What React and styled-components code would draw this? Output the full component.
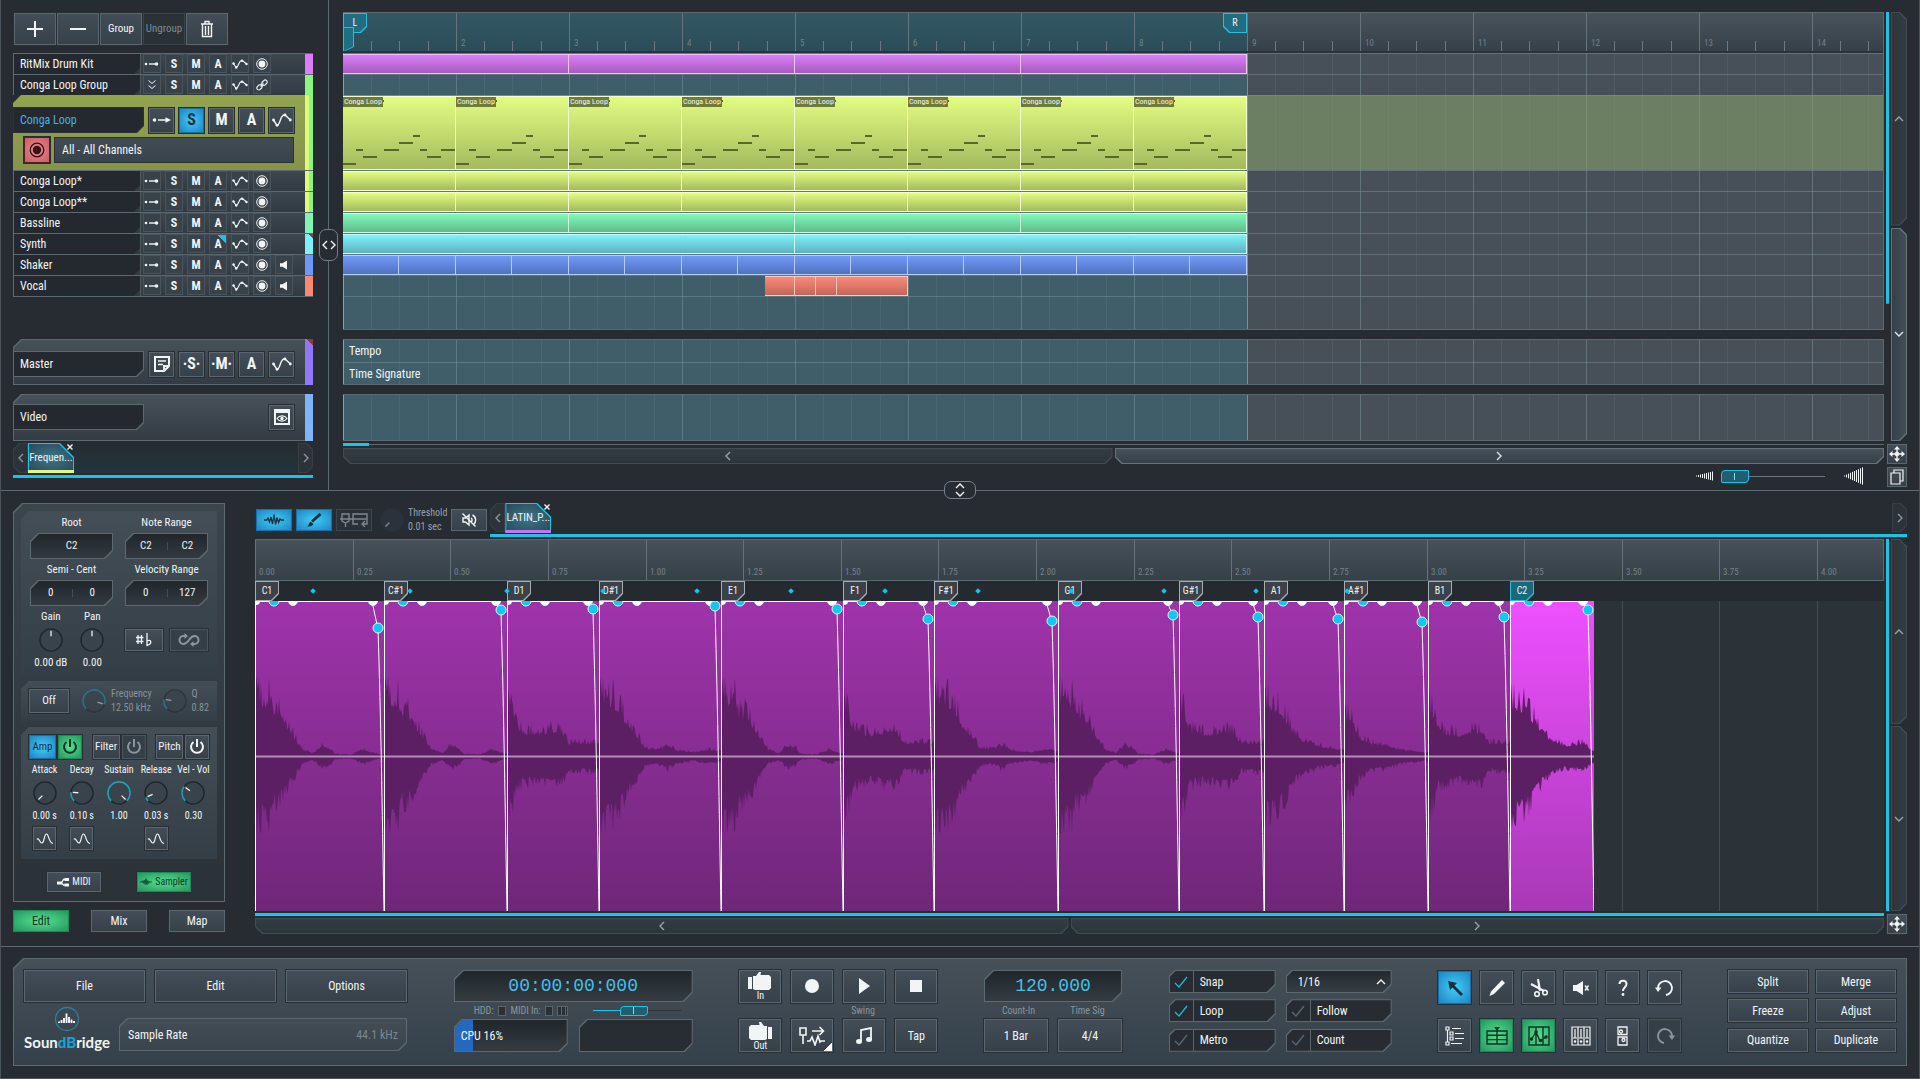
import React from 'react';
import styled, { createGlobalStyle, css } from 'styled-components';

/* ---------- tokens ---------- */
const C = {
  page: '#262c31',
  dark: '#23292e',
  line: '#5d6971',
  cyan: '#1ac4e6',
  text: '#f2f5f6',
  dim: '#7d888f',
};
const BAR = 113;
const LOOP = BAR * 8;

const Global = createGlobalStyle`
  * { box-sizing: border-box; }
  body { margin: 0; background: ${C.page}; }
  body, button, input, select, output {
    font-family: "Liberation Sans Narrow", "Roboto Condensed", Roboto, "Liberation Sans", sans-serif;
    font-size: 11px; line-height: 14px; color: ${C.text};
  }
  button, input, select { margin: 0; padding: 0; border: 0; border-radius: 0; background: none; }
  svg { display: block; flex: none; }
`;

const poly = ({ tl = 0, tr = 0, br = 0, bl = 0 }) =>
  `polygon(${tl}px 0, calc(100% - ${tr}px) 0, 100% ${tr}px, 100% calc(100% - ${br}px), calc(100% - ${br}px) 100%, ${bl}px 100%, 0 calc(100% - ${bl}px), 0 ${tl}px)`;

const cut = (corners, bg, line = C.line) => css`
  position: relative;
  isolation: isolate;
  background: ${line};
  clip-path: ${poly(corners)};
  &::before {
    content: '';
    position: absolute;
    inset: 1px;
    z-index: -1;
    background: ${bg};
    clip-path: ${poly(corners)};
  }
`;

const tones = {
  plain: css`background: linear-gradient(#434d57, #37414a); border-color: #5b6770;`,
  flat: css`background: #39434c; border-color: #46515a;`,
  ghost: css`background: #2a3137; border-color: #3b444b; color: ${C.dim};`,
  muted: css`background: #353f48; border-color: #4a555d; color: #8b959b;`,
  blue: css`background: radial-gradient(#43cdf2, #1c85c8); border-color: #1b6da8; color: #12303f;`,
  green: css`background: radial-gradient(#56e092, #22985f); border-color: #1d8a55; color: #0e3522;`,
  red: css`background: radial-gradient(#e88a8d, #c95d63); border-color: #4b2227; color: #3a1015;`,
};

const Btn = styled.button`
  display: flex;
  align-items: center;
  justify-content: center;
  flex: ${p => (p.$grow ? '1' : 'none')};
  width: ${p => (p.$w ? p.$w + 'px' : 'auto')};
  height: ${p => p.$h}px;
  border: 1px solid;
  box-shadow: 0 0 0 1px #272e34;
  white-space: nowrap;
  font-size: ${p => p.$fs || 11}px;
  font-weight: ${p => (p.$bold ? 700 : 400)};
  ${p => tones[p.$tone || 'plain']}
`;

/* ---------- icons ---------- */
const S = { fill: 'none', stroke: 'currentColor', strokeWidth: 1.4 };
const F = { fill: 'currentColor', stroke: 'none' };
const icons = {
  plus: [18, 18, <path {...S} strokeWidth="2" d="M9 1v16M1 9h16" />],
  minus: [18, 18, <path {...S} strokeWidth="2" d="M1 9h16" />],
  trash: [14, 18, <path {...S} d="M1 4h12M5 4V1.5h4V4M2.5 4v12.500h9V4M5.500 6v9M8.500 6v9" />],
  route: [16, 8, <g {...F}><circle cx="2" cy="4" r="1.300" /><path d="M5 3.300h6v1.400H5z" /><circle cx="12.500" cy="4" r="1.800" /></g>],
  routeBig: [20, 10, <g {...F}><circle cx="2.500" cy="5" r="1.800" /><path d="M6 4.200h9v1.600H6z" /><path d="M13.500 2.200L19 5l-5.500 2.800z" /></g>],
  curve: [16, 10, <g><path {...S} strokeWidth="1.100" d="M1.500 4.500L4 8.500C7 8 6.500 2 9.500 1.500h1l4 3.500" /><g {...F}><circle cx="1.500" cy="4.500" r="1.200" /><circle cx="4.200" cy="8.500" r="1.200" /><circle cx="10" cy="1.800" r="1.200" /><circle cx="14.500" cy="5" r="1.200" /></g></g>],
  curveBig: [20, 14, <g><path {...S} d="M1.500 7L5 12.500C8.500 11.500 8 2.500 12 2h1l5.500 5" /><g {...F}><circle cx="1.500" cy="7" r="1.400" /><circle cx="5" cy="12.300" r="1.400" /><circle cx="13" cy="2" r="1.400" /><circle cx="18.300" cy="7" r="1.400" /></g></g>],
  rec: [12, 12, <g><circle {...S} strokeWidth="1" cx="6" cy="6" r="5.300" /><circle {...F} cx="6" cy="6" r="3.400" /></g>],
  recBig: [16, 16, <g><circle {...S} strokeWidth="1.300" cx="8" cy="8" r="6.800" /><circle {...F} cx="8" cy="8" r="4.200" /></g>],
  dbl: [10, 12, <path {...S} strokeWidth="1" d="M1.500 1.500L5 4.500l3.500-3M1.500 6.500L5 9.500l3.500-3" />],
  link: [12, 12, <g {...S} strokeWidth="1.200"><rect x="5.500" y="1.700" width="6" height="4" rx="2" transform="rotate(-45 8.500 3.700)" /><rect x=".5" y="6.300" width="6" height="4" rx="2" transform="rotate(-45 3.500 8.300)" /><path d="M4.500 7.500l3-3" /></g>],
  spk: [10, 10, <path {...F} d="M1 3.200h2.500L8 .5v9L3.500 6.800H1z" />],
  note: [18, 18, <g {...S} strokeWidth="2"><path d="M2 2h14v9l-5 5H2zM16 11h-5v5" /><path strokeWidth="1.500" d="M5 6h8M5 9.500h5" /></g>],
  eye: [18, 18, <g><path {...S} strokeWidth="2" d="M2 2h14v14H2z" /><path {...F} d="M2 1h14v4H2z" /><path {...S} strokeWidth="1.200" d="M4 10.500c2.500-3.500 7.500-3.500 10 0-2.500 3.500-7.500 3.500-10 0z" /><circle {...F} cx="9" cy="10.500" r="1.700" /></g>],
  up: [10, 6, <path {...S} d="M1 5l4-4 4 4" />],
  down: [10, 6, <path {...S} d="M1 1l4 4 4-4" />],
  left: [6, 10, <path {...S} d="M5 1L1 5l4 4" />],
  right: [6, 10, <path {...S} d="M1 1l4 4-4 4" />],
  move: [16, 16, <g {...F}><path d="M8 0l3 3.500H5zM8 16l3-3.500H5zM0 8l3.500-3v6zM16 8l-3.500-3v6z" /><path {...S} d="M8 3v10M3 8h10" /><circle cx="8" cy="8" r="2.300" /></g>],
  copy: [14, 16, <g {...S} strokeWidth="1.200"><path d="M4 4V1h9v11h-3" /><path d="M1 4h9v11H1z" /></g>],
  wave: [20, 12, <path {...S} strokeWidth="1.300" d="M0 6h3l1-2 1.500 4L7 3l1.500 7L10 .5l1.500 10L13 3.500l1.500 5L16 5l1 1h3" />],
  brush: [16, 14, <g><path {...S} strokeWidth="3" d="M6 8.500L14.500 1" /><path {...F} d="M1 13.500c2-.5 1.500-3.500 3.500-5l3 2.500C6 13 3.500 13.800 1 13.500z" /></g>],
  chain: [28, 14, <g {...S}><path d="M2 1h7v7L5.500 10 2 8zM5.500 10v4M0 6h27" /><path d="M18 11h-5V1h14v10h-4M25 8l-3 3 3 3" /></g>],
  mute: [16, 16, <g {...S}><path d="M2 6h2.500L8 3v10l-3.500-3H2z" /><path d="M1.500 1.500l13 13M10 6c1.500 1 1.500 3 0 4M11.500 3c4 2 4 7 1 9.500" /></g>],
  sharp: [18, 14, <g {...S} strokeWidth="1.300"><path d="M3 2v9M6.500 2v9M1 4.500h7.500M1 8.500h7.500M12 0v12.500c6-2 4-7 0-4.500" /></g>],
  inf: [22, 14, <g><path {...S} strokeWidth="2" d="M7 3H5.500a4 4 0 0 0 0 8C11 11 11 3 16.500 3a4 4 0 0 1 0 8H15" /><path {...F} d="M6.500 0v6l3.500-3zM15.500 8v6L12 11z" /></g>],
  power: [16, 16, <path {...S} strokeWidth="2" d="M8 0v8M4.500 3a6 6 0 1 0 7 0" />],
  env: [18, 12, <path {...S} strokeWidth="1.200" d="M1 6.500c2-3 2.500 4 5 3.500S8 1 10.500 1s2 9 6.500 9.500" />],
  nodes: [12, 10, <g><path {...S} d="M1 6h3.500M4.500 6l2-3.500H9M4.500 6l2 2H9" /><path {...F} d="M0 4.500h5v3H0zM7.500 1H12v3H7.500zM7.500 6.500H12v3H7.500z" /></g>],
  camIn: [24, 20, <path {...F} d="M0 6h4v12H0zM5 5h3l3-4h2l-.5 3H21l2 2v11l-2 2H7l-2-1z" />],
  camOut: [24, 20, <path {...F} d="M24 6h-4v12h4zM19 5h-3l-3-4h-2l.5 3H3L1 6v11l2 2h14l2-1z" />],
  record: [16, 16, <circle {...F} cx="8" cy="8" r="7" />],
  play: [12, 16, <path {...F} d="M1 0l11 8-11 8z" />],
  stop: [12, 12, <path {...F} d="M0 0h12v12H0z" />],
  sync: [28, 20, <g {...S} strokeWidth="1.600"><path d="M2 2h6v7H2zM5 9v9M14 5h11M21.500 1l4 4-4 4M9 15h3l2-4 3 8 3-9 2 6 1-1h4" /></g>],
  music: [18, 18, <g><path {...S} strokeWidth="1.800" d="M6 14V3l10-2v11" /><ellipse {...F} cx="4" cy="14.500" rx="3" ry="2.500" /><ellipse {...F} cx="14" cy="12.500" rx="3" ry="2.500" /></g>],
  arrow: [18, 18, <path {...F} d="M2 2l9 2-2.500 2.500L17 15l-2 2-8.500-8.500L4 11z" />],
  pencil: [18, 18, <path {...F} d="M14 1l3 3L6 15l-4.500 2L3 12.500z" />],
  scissors: [20, 20, <g {...S} strokeWidth="1.600"><path strokeWidth="2.200" d="M9 1l2 12M2 6l13 7" /><circle cx="8" cy="16" r="2.300" /><circle cx="16" cy="14.500" r="2.300" /></g>],
  spkx: [18, 16, <g><path {...F} d="M1 5h3.500L11 1v14L4.500 11H1z" /><path {...S} d="M13 5.500l3.500 5M16.500 5.500l-3.500 5" /></g>],
  help: [12, 18, <g><path {...S} strokeWidth="2" d="M2.500 5c0-4.500 7-4.500 7 0 0 3-3.500 3.500-3.500 7" /><circle {...F} cx="6" cy="15.500" r="1.400" /></g>],
  undo: [20, 18, <g><path {...S} strokeWidth="1.900" d="M3 9a7 7 0 1 1 8 7" /><path {...F} d="M0 8.500h6.500L3 13z" /></g>],
  redo: [20, 18, <g><path {...S} strokeWidth="1.900" d="M17 9a7 7 0 1 0-8 7" /><path {...F} d="M20 8.500h-6.500L17 13z" /></g>],
  tree: [20, 20, <g {...S} strokeWidth="1.200"><path d="M1 1h3v3H1zM5 6h3v3H5zM5 11h3v3H5zM1 16h3v3H1zM7 2.500h9M10 7.500h9M10 12.500h9M6 17.500h11M2.500 4v12" /></g>],
  grid: [22, 18, <g {...S} strokeWidth="1.400"><path d="M1 4h20v13H1zM1 8.300h20M1 12.600h20M11 2v15" /><path {...F} d="M8 0h6l-3 4z" /></g>],
  auto: [22, 20, <g {...S} strokeWidth="1.400"><path d="M1 1h20v18H1zM8 1v18M15 1v18M3 14l5-8 4 9 6-4" /><g {...F}><circle cx="8" cy="6" r="1.800" /><circle cx="12.500" cy="14.500" r="1.800" /><circle cx="3.500" cy="13" r="1.800" /><circle cx="18" cy="11" r="1.800" /></g></g>],
  mixer: [20, 20, <g {...S} strokeWidth="1.200"><path d="M1 1h18v18H1zM7 1v18M13 1v18M4 3v9M10 3v9M16 3v9M2 12h4M8 12h4M14 12h4" /><g {...F}><circle cx="4" cy="15.500" r="1.200" /><circle cx="10" cy="15.500" r="1.200" /><circle cx="16" cy="15.500" r="1.200" /></g></g>],
  rack: [12, 20, <g {...S} strokeWidth="1.300"><path d="M1 1h9v7.500H1zM1 11h9v8H1z" /><circle cx="4" cy="5.500" r="1.500" /><circle cx="6.500" cy="14" r="1.500" /></g>],
  check: [14, 12, <path {...S} strokeWidth="1.300" d="M1 7l4 4 8-10" />],
  x: [6, 6, <path {...S} d="M.5.5l5 5M5.500.5l-5 5" />],
  volSm: [18, 10, <g {...F}>{[0, 1, 2, 3, 4, 5, 6, 7, 8].map(i => <rect key={i} x={i * 2} y={4.500 - i / 2} width="1" height={1 + i} />)}</g>],
  volLg: [20, 18, <g {...F}>{[0, 1, 2, 3, 4, 5, 6, 7, 8, 9].map(i => <rect key={i} x={i * 2} y={8.500 - i * 0.900} width="1" height={1 + i * 1.800} />)}</g>],
};
const Icon = ({ n }) => {
  const [w, h, body] = icons[n];
  return <svg width={w} height={h} viewBox={`0 0 ${w} ${h}`} aria-hidden="true">{body}</svg>;
};

/* ---------- shell ---------- */
const App_ = styled.main`
  display: flex;
  flex-direction: column;
  min-height: 100vh;
  border: solid #4c545a;
  border-width: 0 1px 1px;
  background: ${C.page};
`;
const Arranger = styled.section`
  position: relative;
  display: flex;
  border-bottom: 1px solid ${C.line};
`;
const TrackPane = styled.div`
  position: relative;
  flex: none;
  width: 328px;
  padding: 13px 15px 11px 12px;
  border-right: 1px solid ${C.line};
`;
const Tools = styled.div`
  display: flex;
  gap: 1px;
  padding-left: 1px;
  margin-bottom: 8px;
`;
const TrackList = styled.div`
  height: 277px;
  margin-bottom: 9px;
`;
const Track = styled.div`
  display: flex;
  height: 21px;
  border: solid ${C.line};
  border-width: 1px 0 0 1px;
  background: linear-gradient(#3d4750, #313a42);
  &:last-child { height: 22px; border-bottom-width: 1px; }
`;
const TrackName = styled.span`
  flex: none;
  width: 126px;
  padding: 3px 6px;
  line-height: 15px;
  font-size: 12px;
  white-space: nowrap;
  background: ${C.dark};
  clip-path: ${poly({ br: 6 })};
`;
const Cells = styled.div`
  display: flex;
  flex: 1;
  gap: 4px;
  padding-left: 2px;
  border-left: 1px solid #4e5961;
`;
const Cell = styled.button`
  display: flex;
  align-items: center;
  justify-content: center;
  width: 18px;
  height: 19px;
  border: 1px solid #48535c;
  background: ${p => (p.$auto ? `linear-gradient(45deg, #38424b 0 75%, ${C.cyan} 75%)` : '#38424b')};
  font-weight: 700;
  font-size: 12px;
`;
const Color = styled.span`
  flex: none;
  width: 8px;
  background: ${p => p.$c};
`;
const Selected = styled.div`
  display: flex;
  height: 75px;
  background: linear-gradient(#93a450, #86944a);
  clip-path: ${poly({ tl: 8 })};
`;
const Head = styled.div`
  display: flex;
  height: ${p => p.$h}px;
  margin-bottom: ${p => p.$gap}px;
  ${cut({ tl: 8 }, 'linear-gradient(#47515a, #333c44)')}
`;
const HeadBody = styled.div`
  flex: 1;
  padding-top: ${p => p.$top}px;
`;
const HeadLine = styled.div`
  display: flex;
  align-items: center;
  gap: 5px;
  padding-right: 11px;
`;
const HeadName = styled.span`
  flex: none;
  width: 131px;
  height: 26px;
  padding: 6px 7px;
  font-size: 12px;
  color: ${p => (p.$on ? '#3fb4e6' : C.text)};
  ${p => cut({ br: 7 }, C.dark, p.$on ? '#2b3236' : C.line)}
`;
const Push = styled.span`flex: 1;`;
const Gap = styled.span`
  flex: none;
  width: ${p => p.$w}px;
`;
const ChannelLine = styled.div`
  display: flex;
  gap: 4px;
  padding: 4px 11px 0;
`;
const Channel = styled.select`
  appearance: none;
  flex: 1;
  height: 26px;
  padding: 0 7px;
  border: 1px solid #2b3238;
  background: linear-gradient(#414c55, #39434c);
  font-size: 12px;
`;
const TabBar = styled.div`
  display: flex;
  height: ${p => (p.$h)}px;
  padding-bottom: 2px;
  border-bottom: 3px solid ${C.cyan};
`;
const TabArrow = styled.button`
  width: 15px;
  display: flex;
  align-items: center;
  justify-content: center;
  color: #8b959b;
  ${p => (p.$end ? cut({ tr: 6, br: 6 }, '#2c343a', '#363f46') : cut({ tl: 6, bl: 6 }, '#2c343a', '#363f46'))}
`;
const TabWrap = styled.div`
  position: relative;
  width: 46px;
`;
const Tab = styled.button`
  width: 46px;
  height: 30px;
  overflow: hidden;
  white-space: nowrap;
  font-size: 11px;
  ${cut({ tr: 14 }, 'radial-gradient(#3f7686, #27495a)', C.cyan)}
  &::after {
    content: '';
    position: absolute;
    inset: auto 0 0;
    height: 3px;
    background: ${p => p.$mark};
  }
`;
const TabClose = styled.button`
  position: absolute;
  top: 1px;
  right: 1px;
`;
const TabFill = styled.span`
  flex: 1;
  background: ${p => (p.$lit ? 'linear-gradient(#262c31, #24343e)' : 'none')};
`;
const Grip = styled.button`
  position: absolute;
  z-index: 3;
  display: flex;
  align-items: center;
  justify-content: center;
  gap: 2px;
  ${p => (p.$v
    ? css`flex-direction: column; left: calc(50% - 16px); bottom: -9px; width: 32px; height: 18px;`
    : css`top: 229px; right: -10px; width: 19px; height: 32px;`)}
  border: 1px solid #76828a;
  border-radius: 7px;
  background: ${C.page};
`;

/* ---------- timeline ---------- */
const TimePane = styled.div`
  flex: 1;
  min-width: 0;
  display: flex;
  gap: 2px;
  padding: 12px 12px 3px 14px;
`;
const TimeCol = styled.div`
  flex: 1;
  min-width: 0;
`;
const barLines = (a, b) => css`
  background-image: linear-gradient(90deg, ${a} 0 1px, transparent 1px 28px, ${b} 28px 29px, transparent 29px 56px, ${b} 56px 57px, transparent 57px 85px, ${b} 85px 86px, transparent 86px);
  background-size: ${BAR}px 100%;
`;
const Board = styled.div`
  position: relative;
  height: ${p => p.$h}px;
  margin-bottom: ${p => p.$gap}px;
  overflow: hidden;
  border: solid ${C.line};
  border-width: 1px 1px 1px 0;
  background: linear-gradient(90deg, ${C.cyan} 0 1px, #3f5e69 1px ${LOOP}px, #69808a ${LOOP}px ${LOOP + 1}px, #475059 ${LOOP + 1}px);
`;
const Lines = styled.div`
  height: 100%;
  ${barLines('rgba(150,175,185,.35)', 'rgba(130,155,165,.14)')}
`;
const Ruler = styled.div`
  position: relative;
  display: flex;
  height: 40px;
  overflow: hidden;
  border-bottom: 2px solid #2a3339;
  background:
    linear-gradient(90deg, rgba(30,90,105,.5) 0 ${LOOP}px, transparent ${LOOP}px),
    linear-gradient(#48535c, #364049);
`;
const RulerBar = styled.span`
  flex: none;
  width: ${BAR}px;
  padding: 23px 0 0 4px;
  border-left: 1px solid #66757d;
  color: #71808a;
  font-size: 9px;
  line-height: 14px;
  background:
    linear-gradient(#6b7880, #6b7880) 27px 100% / 1px 10px no-repeat,
    linear-gradient(#6b7880, #6b7880) 55px 100% / 1px 10px no-repeat,
    linear-gradient(#6b7880, #6b7880) 84px 100% / 1px 10px no-repeat;
`;
const Locator = styled.button`
  width: 24px;
  height: 20px;
  font-size: 10px;
  ${p => cut(p.$end ? { bl: 6 } : { br: 6 }, '#246b80', '#27bfdd')}
  position: absolute;
  top: 0;
  left: ${p => p.$x}px;
`;
const Playhead = styled.span`
  position: absolute;
  top: 14px;
  left: 0;
  width: 11px;
  height: 25px;
  background: ${C.cyan};
  clip-path: polygon(0 0, 100% 0, 100% 80%, 0 100%);
  &::before {
    content: '';
    position: absolute;
    inset: 1px;
    background: #1f6f83;
    clip-path: polygon(0 0, 100% 0, 100% 80%, 0 100%);
  }
`;
const Lane = styled.div`
  display: flex;
  height: ${p => p.$h || 21}px;
  padding-left: ${p => p.$x || 0}px;
  border-top: 1px solid rgba(125,145,152,.5);
  background: ${p => (p.$sel ? 'rgba(139,165,105,.55)' : 'none')};
`;
const Clip = styled.div`
  position: relative;
  flex: none;
  width: ${p => p.$w}px;
  border: solid ${p => p.$edge};
  border-width: 1px 1px 1px 0;
  background: linear-gradient(${p => p.$a}, ${p => p.$b});
`;
const ClipName = styled.span`
  position: absolute;
  top: 0;
  left: 0;
  padding: 0 1px;
  background: #6e7b38;
  font-size: 8px;
  line-height: 10px;
  white-space: nowrap;
`;
const MetaLane = styled.div`
  height: 22px;
  padding: 4px 6px;
  font-size: 12px;
  & + & { border-top: 1px solid rgba(125,145,152,.5); height: 23px; }
`;
const Progress = styled.div`
  height: 3px;
  margin-bottom: 2px;
  background: linear-gradient(90deg, ${C.cyan} 0 26px, transparent 26px), linear-gradient(transparent 1px, ${C.line} 1px 2px, transparent 2px);
`;
const HScroll = styled.div`
  display: flex;
  gap: 2px;
`;
const HBtn = styled.button`
  flex: ${p => p.$f} 1 0;
  height: 16px;
  display: flex;
  align-items: center;
  justify-content: center;
  color: ${p => (p.$lit ? '#dfe6e9' : '#98a2a8')};
  ${p => cut({ bl: 7, br: 7 }, p.$lit ? 'linear-gradient(#47515a, #36404a)' : 'linear-gradient(#333c43, #2d353c)', p.$lit ? '#66737b' : '#414b52')}
`;
const ZoomRow = styled.div`
  display: flex;
  justify-content: flex-end;
  align-items: center;
  gap: 7px;
  height: 22px;
  padding: 2px 20px 0 0;
`;
const Range = styled.input`
  appearance: none;
  width: ${p => p.$w}px;
  height: 14px;
  background: linear-gradient(90deg, ${p => p.$fill} 0 40%, ${p => p.$rest} 40%) center / 100% 1px no-repeat;
  &::-webkit-slider-thumb {
    appearance: none;
    width: 28px;
    height: ${p => p.$t}px;
    border: 1px solid ${C.cyan};
    border-radius: 4px 1px 4px 1px;
    background: linear-gradient(90deg, transparent 12px, #7fdcec 12px 13px, transparent 13px) center / 100% 7px no-repeat, #1f5f70;
  }
`;
const SideCol = styled.div`
  flex: none;
  width: 21px;
  display: flex;
  flex-direction: column;
  align-items: flex-end;
  gap: 3px;
`;
const VScroll = styled.div`
  display: grid;
  grid-template-rows: 1fr 1fr;
  row-gap: 2px;
  height: ${p => (p.$h ? p.$h + 'px' : 'auto')};
  flex: ${p => (p.$h ? 'none' : '1')};
  width: 21px;
  padding-left: 5px;
  background: linear-gradient(${C.cyan}, ${C.cyan}) 0 0 / 3px ${p => p.$fill} no-repeat;
`;
const VBtn = styled.button`
  display: flex;
  align-items: center;
  justify-content: center;
  color: ${p => (p.$lit ? '#dfe6e9' : '#98a2a8')};
  ${p => cut({ tr: 7, br: 7 }, p.$lit ? 'linear-gradient(90deg, #36404a, #444e57)' : 'linear-gradient(90deg, #2d353c, #333c43)', p.$lit ? '#66737b' : '#414b52')}
`;

/* ---------- sampler ---------- */
const Editor = styled.section`
  flex: 1;
  display: flex;
  padding: 12px 12px 12px;
  border-bottom: 1px solid ${C.line};
`;
const Side = styled.div`
  flex: none;
  width: 212px;
  margin-right: 30px;
`;
const SidePanel = styled.div`
  display: flex;
  flex-direction: column;
  gap: 6px;
  padding: 8px 8px 10px;
  margin-bottom: 8px;
  ${cut({ tl: 9 }, 'linear-gradient(#3b454e, #2a3137)')}
`;
const Card = styled.div`
  background: linear-gradient(#434e57, #343e46);
  clip-path: ${poly({ tl: 8 })};
  ${p => p.$kind === 'tune' && css`
    display: grid;
    grid-template-columns: 83px 83px;
    column-gap: 12px;
    row-gap: 4px;
    padding: 5px 9px;
  `}
  ${p => p.$kind === 'filter' && css`
    display: flex;
    align-items: center;
    gap: 5px;
    height: 40px;
    padding: 0 8px;
    color: #87939a;
    font-size: 10px;
  `}
  ${p => p.$kind === 'amp' && css`padding: 8px 5px 9px;`}
`;
const Field = styled.label`
  display: flex;
  flex-direction: column;
  align-items: center;
  gap: 3px;
  font-size: 11px;
`;
const FieldBox = styled.span`
  display: flex;
  width: 83px;
  height: 26px;
  ${cut({ tl: 8, br: 8 }, 'linear-gradient(#20262a, #333b41)')}
`;
const FieldInput = styled.input`
  width: 0;
  flex: 1;
  text-align: center;
  & + & { background: linear-gradient(#444d53, #444d53) 0 50% / 1px 8px no-repeat; }
`;
const KnobPair = styled.div`
  display: grid;
  grid-template-columns: 1fr 1fr;
`;
const KnobCol = styled.div`
  display: flex;
  flex-direction: column;
  align-items: center;
  gap: 4px;
  white-space: nowrap;
`;
const IconPair = styled.div`
  display: flex;
  align-items: center;
  justify-content: space-between;
`;
const Two = styled.span`
  display: flex;
  flex-direction: column;
  white-space: nowrap;
  ${p => p.$light && css`color: #98a1a6; font-size: 10px;`}
`;
const AmpTop = styled.div`
  display: flex;
  justify-content: space-between;
  padding: 0 3px;
  margin-bottom: 4px;
`;
const AmpPair = styled.div`
  display: flex;
  gap: 2px;
`;
const AmpKnobs = styled.div`
  display: grid;
  grid-template-columns: repeat(5, 1fr);
  font-size: 10px;
`;
const Modes = styled.div`
  display: flex;
  justify-content: space-between;
  padding: 7px 26px 0;
`;
const ModeIn = styled.span`
  display: flex;
  align-items: center;
  gap: 3px;
`;
const Pages = styled.div`
  display: flex;
  justify-content: space-between;
`;
const Work = styled.div`
  flex: 1;
  min-width: 0;
  display: flex;
  flex-direction: column;
`;
const WorkTop = styled.div`
  display: flex;
  gap: 3px;
  height: 34px;
`;
const WorkTools = styled.div`
  display: flex;
  align-items: center;
  gap: 4px;
  padding: 5px 0 6px 1px;
`;
const WorkTabs = styled.div`
  flex: 1;
  min-width: 0;
`;
const WorkBody = styled.div`
  flex: 1;
  display: flex;
  gap: 2px;
  padding-top: 2px;
`;
const WaveCol = styled.div`
  flex: 1;
  min-width: 0;
  display: flex;
  flex-direction: column;
`;
const WaveRuler = styled.div`
  display: flex;
  height: 42px;
  overflow: hidden;
  border: 1px solid ${C.line};
  border-left: 0;
  background: linear-gradient(#47515a, #364048);
`;
const Tick = styled.span`
  flex: none;
  width: ${p => p.$w}px;
  padding: 25px 0 0 3px;
  border-left: 1px solid ${p => (p.$soft ? '#454d53' : '#66727a')};
  font-size: 9px;
  color: #75818a;
`;
const SliceLane = styled.div`
  position: relative;
  display: flex;
  height: 20px;
  background: #242a2f;
`;
const SliceHead = styled.span`
  flex: none;
  width: ${p => p.$w}px;
`;
const SliceTag = styled.button`
  width: 24px;
  height: 20px;
  font-size: 10px;
  ${p => cut({ br: 7 }, p.$on ? '#17697b' : '#3a4148', p.$on ? '#27bfdd' : '#a5adb2')}
`;
const Marker = styled.span`
  position: absolute;
  top: 8px;
  left: ${p => p.$x}px;
  width: 4px;
  height: 4px;
  margin-left: -2px;
  background: #10c6e8;
  transform: rotate(45deg);
`;
const WaveArea = styled.div`
  position: relative;
  flex: 1;
  min-height: 308px;
  display: flex;
  overflow: hidden;
  background: #2b3238;
`;
const WaveGrid = styled.div`
  position: absolute;
  inset: 0;
  display: flex;
`;
const Slice = styled.div`
  position: relative;
  flex: none;
  width: ${p => p.$w}px;
  background: ${p => (p.$on ? 'linear-gradient(#ee50ff, #a838b6)' : 'linear-gradient(#9f33ab, #6f2779)')};
  svg { position: absolute; inset: 0; }
`;
const WaveFoot = styled.div`
  height: 3px;
  margin: 2px 0;
  background: ${C.cyan};
`;

/* ---------- transport ---------- */
const Footer = styled.footer`
  padding: 11px 12px 12px;
`;
const Deck = styled.div`
  display: flex;
  justify-content: space-between;
  gap: 12px;
  padding: 12px 11px 14px;
  font-size: 12px;
  ${cut({ tl: 10 }, 'linear-gradient(#465059, #34404a)')}
`;
const Stack = styled.div`
  display: flex;
  flex-direction: column;
  width: ${p => p.$w}px;
`;
const Line = styled.div`
  display: flex;
  align-items: ${p => (p.$end ? 'flex-end' : 'center')};
  justify-content: space-between;
  gap: ${p => p.$gap || 0}px;
  height: ${p => p.$h || 32}px;
`;
const Mid = styled.div`
  display: ${p => (p.$cols ? 'grid' : 'flex')};
  grid-template-columns: ${p => p.$cols || 'none'};
  align-items: center;
  height: 17px;
  font-size: 10px;
  color: #8a959b;
  text-align: ${p => (p.$cols ? 'center' : 'left')};
`;
const Logo = styled.div`
  display: flex;
  flex-direction: column;
  align-items: center;
  justify-content: flex-end;
  gap: 2px;
  width: 86px;
  height: 44px;
`;
const Word = styled.span`
  font: 700 15px/17px Lato, "Open Sans", sans-serif;
  b { color: #1d9fd8; }
`;
const Rate = styled.div`
  display: flex;
  justify-content: space-between;
  align-items: center;
  width: 288px;
  height: 33px;
  padding: 0 9px;
  ${cut({ tl: 8, br: 8 }, 'linear-gradient(#434d56, #3a444c)')}
  span { color: #7b878e; }
`;
const Led = styled.output`
  display: flex;
  align-items: center;
  justify-content: center;
  height: 32px;
  color: #46bfe8;
  font-family: "Liberation Mono", monospace;
  font-size: 18px;
  ${cut({ tl: 9, br: 9 }, 'linear-gradient(#20262a, #343c42)')}
`;
const Meter = styled.div`
  display: flex;
  align-items: center;
  width: 114px;
  height: 33px;
  padding-left: 7px;
  ${p => cut({ tl: 8, br: 8 }, p.$fill ? 'linear-gradient(90deg, #2469bd 0 18px, transparent 18px), linear-gradient(#20262a, #343c42)' : '#272d33')}
`;
const Status = styled.div`
  display: flex;
  align-items: center;
  gap: 4px;
  width: 94px;
  margin-left: 20px;
  white-space: nowrap;
`;
const Led1 = styled.i`
  width: ${p => p.$w}px;
  height: 10px;
  border: 1px solid #59646c;
  background: repeating-linear-gradient(90deg, #2a3036 0 3px, ${p => (p.$w > 12 ? '#59646c' : '#2a3036')} 3px 4px);
`;
const Tri = styled.span`
  display: flex;
  align-items: center;
  justify-content: center;
  width: 100%;
  height: 100%;
  background: linear-gradient(135deg, transparent 50%, #fff 50%) 100% 100% / 8px 8px no-repeat;
`;
const Cap = styled.span`
  display: flex;
  flex-direction: column;
  align-items: center;
  font-size: 10px;
  line-height: 10px;
`;
const Opts = styled.div`
  display: grid;
  grid-template-columns: 107px 106px;
  gap: 6px 10px;
`;
const Toggle = styled.label`
  display: flex;
  align-items: center;
  height: 23px;
  ${cut({ tl: 6, br: 8 }, '#262c31')}
`;
const Tickbox = styled.span`
  display: flex;
  align-items: center;
  justify-content: center;
  width: 25px;
  height: 23px;
  margin-right: 6px;
  border-right: 1px solid #59646c;
  color: ${p => (p.$on ? '#24b6d6' : '#5c676e')};
  input {
    appearance: none;
    position: absolute;
    width: 24px;
    height: 22px;
  }
`;
const Snap = styled.span`
  display: flex;
  align-items: center;
  height: 23px;
  padding: 0 6px 0 12px;
  ${cut({ tl: 6, br: 8 }, 'linear-gradient(#23292e, #363e44)')}
  select { appearance: none; flex: 1; font-size: 12px; }
`;
const ToolGrid = styled.div`
  display: grid;
  grid-template-columns: repeat(6, 33px);
  column-gap: 9px;
  row-gap: 15px;
  padding-top: 1px;
`;
const Acts = styled.div`
  display: grid;
  grid-template-columns: 80px 80px;
  gap: 6px 8px;
`;

/* ---------- data ---------- */
const tracks = [
  { n: 'RitMix Drum Kit', c: '#dc7cf6' },
  { n: 'Conga Loop Group', c: '#8bf57d', group: true },
  { n: 'Conga Loop', selected: true },
  { n: 'Conga Loop*', c: 'linear-gradient(90deg, #dff97c 0 4px, #8bf57d 4px)' },
  { n: 'Conga Loop**', c: 'linear-gradient(90deg, #dff97c 0 4px, #8bf57d 4px)' },
  { n: 'Bassline', c: '#7ef7b4' },
  { n: 'Synth', c: 'linear-gradient(45deg, #7cf0fb 0 85%, #8a3a44 85%)', auto: true },
  { n: 'Shaker', c: '#6d98f8', spk: true },
  { n: 'Vocal', c: '#f98873', spk: true },
];
const P = {
  purple: ['#db80f6', '#a65cbd', '#efc4fa'],
  yellow: ['#e3fc81', '#a3ba5e', '#f6ffd0'],
  green: ['#81f9b9', '#60bb8b', '#c8ffe2'],
  cyan: ['#7ef2fc', '#5fb1bd', '#c9fbff'],
  blue: ['#709bf9', '#5172bd', '#b5ccff'],
  red: ['#f98a79', '#c5655a', '#ffc9c0'],
};
const rep = (n, w) => Array.from({ length: n }, () => w);
const lanes = [
  { p: 'purple', w: rep(4, BAR * 2) },
  { p: 'purple', w: [] },
  { p: 'yellow', w: rep(8, BAR), h: 75, midi: true },
  { p: 'yellow', w: rep(8, BAR) },
  { p: 'yellow', w: rep(8, BAR) },
  { p: 'green', w: rep(4, BAR * 2) },
  { p: 'cyan', w: rep(2, BAR * 4) },
  { p: 'blue', w: Array.from({ length: 16 }, (_, i) => 56 + (i % 2)) },
  { p: 'red', w: [30, 21, 21, 71], x: 422 },
];
const notes = [[0, 66, 13], [13, 52, 7], [20, 59, 14], [34, 3, 7], [41, 52, 15], [56, 45, 14], [70, 38, 7], [77, 52, 7], [84, 59, 14], [98, 52, 14]];

const slices = [
  ['C1', 129, 28, 'a'], ['C#1', 123, 10, 'a'], ['D1', 92, 9, 'b'], ['D#1', 122, 6, 'c'], ['E1', 122, 9, 'a'],
  ['F1', 91, 19, 'b'], ['F#1', 124, 21, 'c'], ['G1', 121, 15, 'a'], ['G#1', 85, 17, 'b'], ['A1', 80, 19, 'd'],
  ['A#1', 84, 22, 'e'], ['B1', 82, 17, 'b'], ['C2', 84, 10, 'f'],
];
const shapes = {
  a: [[0, 80], [14, 78], [18, 58], [25, 58], [38, 30], [47, 9], [58, 4], [66, 14], [74, 12], [80, 3], [96, 2], [108, 9], [122, 3], [130, 2]],
  b: [[0, 70], [5, 62], [11, 36], [30, 30], [44, 38], [54, 34], [62, 18], [72, 19], [92, 19]],
  c: [[0, 80], [14, 78], [22, 64], [28, 44], [38, 30], [46, 11], [60, 10], [68, 16], [78, 8], [96, 5], [110, 9], [125, 6]],
  d: [[0, 74], [10, 70], [20, 58], [30, 32], [40, 22], [56, 14], [80, 9]],
  e: [[0, 58], [8, 48], [16, 26], [26, 18], [42, 16], [56, 9], [84, 5]],
  f: [[0, 74], [16, 68], [22, 54], [32, 34], [42, 22], [56, 14], [72, 18], [84, 7]],
};
const envAt = (pts, x) => {
  for (let i = 1; i < pts.length; i++) {
    if (x <= pts[i][0]) {
      const [x0, y0] = pts[i - 1];
      const [x1, y1] = pts[i];
      return y0 + ((y1 - y0) * (x - x0)) / (x1 - x0);
    }
  }
  return pts[pts.length - 1][1];
};
const wavePath = (kind, w, seed) => {
  let s = seed * 7919 + 13;
  const rnd = () => ((s = (s * 16807) % 2147483647) / 2147483647);
  rnd();
  const up = [];
  const dn = [];
  for (let x = 0; x <= w; x++) {
    const e = envAt(shapes[kind], x);
    const peak = [1, 4, 14, 24].includes(x) ? 1 : 0.620 + rnd() ** 2 * 0.360;
    const low = [2, 6, 14, 21].includes(x) ? 0.960 : 0.600 + rnd() ** 2 * 0.360;
    up.push(`${x} ${(155 - e * peak).toFixed(1)}`);
    dn.unshift(`${x} ${(156 + e * low).toFixed(1)}`);
  }
  return `M${up.join('L')}L${dn.join('L')}Z`;
};
const tickAt = i => Math.round((i * 1562) / 16);
const ticks = Array.from({ length: 17 }, (_, i) => ({ t: (i / 4).toFixed(2), w: tickAt(i + 1) - tickAt(i) }));
const markers = [58, 155, 252, 348, 442, 536, 630, 723, 816, 909, 1001, 1092];

/* ---------- pieces ---------- */
const Knob = ({ v, label, arc = true, dim, bare }) => {
  const at = (t, r) => {
    const a = ((-135 + t * 270) * Math.PI) / 180;
    return [13 + r * Math.sin(a), 13 - r * Math.cos(a)];
  };
  const [px, py] = at(v, 10);
  const [qx, qy] = at(v, 4);
  const [sx, sy] = at(0, 12);
  const [ex, ey] = at(v, 12);
  return (
    <svg width="24" height="24" viewBox="0 0 26 26" overflow="visible" role="slider" aria-label={label} aria-valuenow={Math.round(v * 100)} opacity={dim ? 0.500 : 1}>
      <circle cx="13" cy="13" r="12" fill={bare ? '#2b323b' : '#39434b'} stroke={bare ? '#2b323b' : '#1f262b'} strokeWidth="1.500" />
      {arc && v > 0 && <path d={`M${sx} ${sy}A12 12 0 ${v > 0.667 ? 1 : 0} 1 ${ex} ${ey}`} fill="none" stroke="#1f9fb8" strokeWidth="1.800" />}
      <path d={`M${qx} ${qy}L${px} ${py}`} stroke={bare ? '#8b949a' : '#f0f3f4'} strokeWidth="1.400" />
    </svg>
  );
};

const BigButtons = ({ s = 'S', m = 'M', on, first = 'routeBig' }) => (
  <>
    <Btn $w={25} $h={25} aria-label="Routing"><Icon n={first} /></Btn>
    <Btn $w={25} $h={25} $fs={16} $bold $tone={on ? 'blue' : 'plain'}>{s}</Btn>
    <Btn $w={25} $h={25} $fs={16} $bold>{m}</Btn>
    <Btn $w={25} $h={25} $fs={16} $bold>A</Btn>
    <Btn $w={25} $h={25} aria-label="Automation"><Icon n="curveBig" /></Btn>
  </>
);

const TrackItem = ({ t }) => {
  if (t.selected) {
    return (
      <Selected>
        <HeadBody $top={12}>
          <HeadLine>
            <HeadName $on>{t.n}</HeadName>
            <BigButtons on />
          </HeadLine>
          <ChannelLine>
            <Btn $w={26} $h={26} $tone="red" aria-label="Arm"><Icon n="recBig" /></Btn>
            <Channel aria-label="Input channels"><option>All - All Channels</option></Channel>
          </ChannelLine>
        </HeadBody>
        <Color $c="linear-gradient(90deg, #dff97c 0 4px, #8bf57d 4px)" />
      </Selected>
    );
  }
  return (
    <Track>
      <TrackName>{t.n}</TrackName>
      <Cells>
        <Cell aria-label="Routing"><Icon n={t.group ? 'dbl' : 'route'} /></Cell>
        <Cell>S</Cell>
        <Cell>M</Cell>
        <Cell $auto={t.auto}>A</Cell>
        <Cell aria-label="Automation"><Icon n="curve" /></Cell>
        <Cell aria-label="Record"><Icon n={t.group ? 'link' : 'rec'} /></Cell>
        {t.spk && <Cell aria-label="Monitor"><Icon n="spk" /></Cell>}
      </Cells>
      <Color $c={t.c} />
    </Track>
  );
};

const TrackSide = () => (
  <TrackPane>
    <Tools>
      <Btn $w={42} $h={32} aria-label="Add track"><Icon n="plus" /></Btn>
      <Btn $w={42} $h={32} aria-label="Remove track"><Icon n="minus" /></Btn>
      <Btn $w={42} $h={32} $fs={11}>Group</Btn>
      <Btn $w={42} $h={32} $fs={11} $tone="ghost">Ungroup</Btn>
      <Btn $w={42} $h={32} aria-label="Delete"><Icon n="trash" /></Btn>
    </Tools>
    <TrackList>{tracks.map(t => <TrackItem key={t.n} t={t} />)}</TrackList>
    <Head $h={46} $gap={9}>
      <HeadBody $top={12}>
        <HeadLine>
          <HeadName>Master</HeadName>
          <BigButtons first="note" s="·S·" m="·M·" />
        </HeadLine>
      </HeadBody>
      <Color $c="linear-gradient(45deg, #9078f8 0 88%, #8a3a44 88%)" />
    </Head>
    <Head $h={47} $gap={2}>
      <HeadBody $top={10}>
        <HeadLine>
          <HeadName>Video</HeadName>
          <Push />
          <Btn $w={25} $h={25} aria-label="Show video"><Icon n="eye" /></Btn>
        </HeadLine>
      </HeadBody>
      <Color $c="#7fb4fb" />
    </Head>
    <TabBar $h={35}>
      <TabArrow aria-label="Previous tab"><Icon n="left" /></TabArrow>
      <TabWrap>
        <Tab $mark="#dff97c">Frequen...</Tab>
        <TabClose aria-label="Close tab"><Icon n="x" /></TabClose>
      </TabWrap>
      <TabFill $lit />
      <TabArrow $end aria-label="Next tab"><Icon n="right" /></TabArrow>
    </TabBar>
    <Grip aria-label="Resize track list"><Icon n="left" /><Icon n="right" /></Grip>
  </TrackPane>
);

const Timeline = () => (
  <TimePane>
    <TimeCol>
      <Board $h={318} $gap={9}>
        <Ruler>
          {Array.from({ length: 14 }, (_, i) => <RulerBar key={i}>{i + 1}</RulerBar>)}
          <Locator $x={0}>L</Locator>
          <Playhead />
          <Locator $x={LOOP - 24} $end>R</Locator>
        </Ruler>
        <Lines>
          {lanes.map((l, i) => (
            <Lane key={i} $h={l.h} $x={l.x} $sel={l.midi}>
              {l.w.map((w, j) => (
                <Clip key={j} $w={w} $a={P[l.p][0]} $b={P[l.p][1]} $edge={P[l.p][2]}>
                  {l.midi && (
                    <>
                      <ClipName>Conga Loop</ClipName>
                      <svg width="112" height="72" viewBox="0 0 112 72" aria-hidden="true">
                        {notes.map(([x, y, nw]) => <rect key={x} x={x} y={y} width={nw} height="2" fill="#59672b" />)}
                      </svg>
                    </>
                  )}
                </Clip>
              ))}
            </Lane>
          ))}
          <Lane />
        </Lines>
      </Board>
      <Board $h={46} $gap={9}>
        <Lines><MetaLane>Tempo</MetaLane><MetaLane>Time Signature</MetaLane></Lines>
      </Board>
      <Board $h={47} $gap={2}><Lines /></Board>
      <Progress />
      <HScroll>
        <HBtn $f={1} aria-label="Scroll left"><Icon n="left" /></HBtn>
        <HBtn $f={1} $lit aria-label="Scroll right"><Icon n="right" /></HBtn>
      </HScroll>
      <ZoomRow>
        <Icon n="volSm" />
        <Range type="range" aria-label="Timeline zoom" defaultValue="0" $w={104} $t={13} $fill="#6a747b" $rest="#6a747b" />
        <Gap $w={5} />
        <Icon n="volLg" />
      </ZoomRow>
    </TimeCol>
    <SideCol>
      <VScroll $h={429} $fill="68%">
        <VBtn aria-label="Scroll up"><Icon n="up" /></VBtn>
        <VBtn $lit aria-label="Scroll down"><Icon n="down" /></VBtn>
      </VScroll>
      <Btn $w={20} $h={20} aria-label="Pan view"><Icon n="move" /></Btn>
      <Btn $w={20} $h={20} aria-label="Detach"><Icon n="copy" /></Btn>
    </SideCol>
  </TimePane>
);

const TwinField = ({ label, values }) => (
  <Field>
    {label}
    <FieldBox>{values.map((v, i) => <FieldInput key={i} aria-label={label} defaultValue={v} />)}</FieldBox>
  </Field>
);

const ampKnobs = [
  ['Attack', 0, '0.00 s', true], ['Decay', 0.180, '0.10 s', true], ['Sustain', 1, '1.00', false],
  ['Release', 0.080, '0.03 s', true], ['Vel - Vol', 0.300, '0.30', false],
];

const SamplerSide = () => (
  <Side>
    <SidePanel>
      <Card $kind="tune">
        <TwinField label="Root" values={['C2']} />
        <TwinField label="Note Range" values={['C2', 'C2']} />
        <TwinField label="Semi - Cent" values={['0', '0']} />
        <TwinField label="Velocity Range" values={['0', '127']} />
        <KnobPair>
          <KnobCol>Gain<Knob v={0.500} arc={false} label="Gain" />0.00 dB</KnobCol>
          <KnobCol>Pan<Knob v={0.500} arc={false} label="Pan" />0.00</KnobCol>
        </KnobPair>
        <IconPair>
          <Btn $w={38} $h={22} aria-label="Key tracking"><Icon n="sharp" /></Btn>
          <Btn $w={38} $h={22} $tone="muted" aria-label="Loop sample"><Icon n="inf" /></Btn>
        </IconPair>
      </Card>
      <Card $kind="filter">
        <Btn $w={40} $h={24}>Off</Btn>
        <Push />
        <Knob v={0.900} dim label="Frequency" />
        <Two><span>Frequency</span><span>12.50 kHz</span></Two>
        <Gap $w={1} />
        <Knob v={0.200} dim label="Q" />
        <Two><span>Q</span><span>0.82</span></Two>
      </Card>
      <Card $kind="amp">
        <AmpTop>
          <AmpPair>
            <Btn $w={27} $h={24} $tone="blue">Amp</Btn>
            <Btn $w={24} $h={24} $tone="green" aria-label="Amp power"><Icon n="power" /></Btn>
          </AmpPair>
          <AmpPair>
            <Btn $w={27} $h={24}>Filter</Btn>
            <Btn $w={24} $h={24} $tone="muted" aria-label="Filter power"><Icon n="power" /></Btn>
          </AmpPair>
          <AmpPair>
            <Btn $w={27} $h={24}>Pitch</Btn>
            <Btn $w={24} $h={24} aria-label="Pitch power"><Icon n="power" /></Btn>
          </AmpPair>
        </AmpTop>
        <AmpKnobs>
          {ampKnobs.map(([l, v, t, e]) => (
            <KnobCol key={l}>
              {l}
              <Knob v={v} label={l} />
              {t}
              {e && <Btn $w={23} $h={23} aria-label={`${l} envelope`}><Icon n="env" /></Btn>}
            </KnobCol>
          ))}
        </AmpKnobs>
      </Card>
      <Modes>
        <Btn $w={54} $h={20} $fs={10}><ModeIn><Icon n="nodes" />MIDI</ModeIn></Btn>
        <Btn $w={54} $h={20} $fs={10} $tone="green"><ModeIn><svg width="12" height="10" viewBox="0 0 20 12" aria-hidden="true">{icons.wave[2]}</svg>Sampler</ModeIn></Btn>
      </Modes>
    </SidePanel>
    <Pages>
      <Btn $w={56} $h={22} $fs={12} $tone="green">Edit</Btn>
      <Btn $w={56} $h={22} $fs={12}>Mix</Btn>
      <Btn $w={56} $h={22} $fs={12}>Map</Btn>
    </Pages>
  </Side>
);

const SliceView = ({ s, i }) => {
  const [, w, hy, kind] = s;
  return (
    <Slice $w={w} $on={i === slices.length - 1}>
      <svg width="100%" height="100%" viewBox={`0 0 ${w} 310`} preserveAspectRatio="none" aria-hidden="true">
        <path d={wavePath(kind, w, i + 1)} fill="#5d1f63" />
        <path d={`M0 155.500H${w}`} stroke="#b58bb9" strokeWidth="2" />
        <path d={`M0 .5H${w - 12}L${w - 6} ${hy}C${w - 3} 120 ${w - 2} 200 ${w} 310`} fill="none" stroke="#fff" strokeWidth="1" />
        <path d="M.5 0V310" stroke="#fff" strokeWidth="1" />
        <g stroke="#d6f7ff" strokeWidth="1">
          <circle cx="1" cy="0" r="4" fill="#fff" stroke="none" />
          <circle cx="19" cy="0" r="5" fill="#10c8f4" />
          <circle cx="38" cy="0" r="4.500" fill="#fff" />
          <circle cx={w - 11} cy="0" r="4.500" fill="#fff" />
          <circle cx={w - 6} cy={hy - 1} r="5" fill="#10c8f4" />
        </g>
      </svg>
    </Slice>
  );
};

const Sampler = () => (
  <Editor>
    <SamplerSide />
    <Work>
      <WorkTop>
        <WorkTools>
          <Btn $w={36} $h={22} $tone="blue" aria-label="Detect transients"><Icon n="wave" /></Btn>
          <Btn $w={36} $h={22} $tone="blue" aria-label="Slice tool"><Icon n="brush" /></Btn>
          <Btn $w={36} $h={22} $tone="ghost" aria-label="Chain"><Icon n="chain" /></Btn>
          <Gap />
          <Knob v={0} bare label="Threshold" />
          <Two $light><span>Threshold</span><span>0.01 sec</span></Two>
          <Btn $w={36} $h={22} aria-label="Mute preview"><Icon n="mute" /></Btn>
        </WorkTools>
        <WorkTabs>
          <TabBar $h={34}>
            <TabArrow aria-label="Previous sample"><Icon n="left" /></TabArrow>
            <TabWrap>
              <Tab $mark="#c873ee">LATIN_P...</Tab>
              <TabClose aria-label="Close sample"><Icon n="x" /></TabClose>
            </TabWrap>
            <TabFill />
            <TabArrow $end aria-label="Next sample"><Icon n="right" /></TabArrow>
          </TabBar>
        </WorkTabs>
      </WorkTop>
      <WorkBody>
        <WaveCol>
          <WaveRuler>{ticks.map(t => <Tick key={t.t} $w={t.w}>{t.t}</Tick>)}</WaveRuler>
          <SliceLane>
            {slices.map(([n, w], i) => (
              <SliceHead key={n} $w={w}><SliceTag $on={i === slices.length - 1}>{n}</SliceTag></SliceHead>
            ))}
            {markers.map(x => <Marker key={x} $x={x} />)}
          </SliceLane>
          <WaveArea>
            <WaveGrid>{ticks.map(t => <Tick key={t.t} $w={t.w} $soft />)}</WaveGrid>
            {slices.map((s, i) => <SliceView key={s[0]} s={s} i={i} />)}
          </WaveArea>
          <WaveFoot />
          <HScroll>
            <HBtn $f={1} aria-label="Scroll left"><Icon n="left" /></HBtn>
            <HBtn $f={1} aria-label="Scroll right"><Icon n="right" /></HBtn>
          </HScroll>
        </WaveCol>
        <SideCol>
          <VScroll $fill="100%">
            <VBtn aria-label="Scroll up"><Icon n="up" /></VBtn>
            <VBtn aria-label="Scroll down"><Icon n="down" /></VBtn>
          </VScroll>
          <Btn $w={20} $h={20} aria-label="Pan view"><Icon n="move" /></Btn>
        </SideCol>
      </WorkBody>
    </Work>
  </Editor>
);

const Check = ({ label, on }) => (
  <Toggle>
    <Tickbox $on={on}><input type="checkbox" defaultChecked={on} /><Icon n="check" /></Tickbox>
    {label}
  </Toggle>
);

const TBtn = ({ children, ...p }) => <Btn $w={42} $h={33} {...p}>{children}</Btn>;

const Transport = () => (
  <Footer>
    <Deck>
      <Stack $w={383}>
        <Line $gap={10}>
          <Btn $grow $h={32} $fs={12}>File</Btn>
          <Btn $grow $h={32} $fs={12}>Edit</Btn>
          <Btn $grow $h={32} $fs={12}>Options</Btn>
        </Line>
        <Line $h={49} $end>
          <Logo>
            <svg width="26" height="26" viewBox="0 0 26 26" aria-hidden="true">
              <circle cx="13" cy="13" r="11.500" fill="none" stroke="#2e7ea0" strokeWidth="1.300" />
              <path d="M5 17v-1.500M7.500 17v-3M10 17v-5M12.500 17V7.500M15 17v-6M17.500 17v-3.500M20 17v-2" stroke="#fff" strokeWidth="1.800" />
            </svg>
            <Word>Soun<b>dB</b>ridge</Word>
          </Logo>
          <Rate>Sample Rate <span>44.1 kHz</span></Rate>
        </Line>
      </Stack>
      <Stack $w={239}>
        <Led>00:00:00:000</Led>
        <Mid>
          <Status>HDD: <Led1 $w={11} /> MIDI In: <Led1 $w={10} /><Led1 $w={14} /></Status>
          <Push />
          <Range type="range" aria-label="Position" defaultValue="45" $w={88} $t={10} $fill={C.cyan} $rest="#2c343a" />
          <Gap $w={12} />
        </Mid>
        <Line $h={33}><Meter $fill>CPU 16%</Meter><Meter /></Line>
      </Stack>
      <Stack $w={198}>
        <Line>
          <TBtn><Cap><Icon n="camIn" />In</Cap></TBtn>
          <TBtn aria-label="Record"><Icon n="record" /></TBtn>
          <TBtn aria-label="Play"><Icon n="play" /></TBtn>
          <TBtn aria-label="Stop"><Icon n="stop" /></TBtn>
        </Line>
        <Mid $cols="repeat(4, 1fr)"><span /><span /><span>Swing</span></Mid>
        <Line $h={33}>
          <TBtn><Cap><Icon n="camOut" />Out</Cap></TBtn>
          <TBtn aria-label="Sync"><Tri><Icon n="sync" /></Tri></TBtn>
          <TBtn aria-label="Swing"><Icon n="music" /></TBtn>
          <TBtn $fs={12}>Tap</TBtn>
        </Line>
      </Stack>
      <Stack $w={138}>
        <Led>120.000</Led>
        <Mid $cols="1fr 1fr"><span>Count-In</span><span>Time Sig</span></Mid>
        <Line $h={33} $gap={10}>
          <Btn $grow $h={33} $fs={12}>1 Bar</Btn>
          <Btn $grow $h={33} $fs={12}>4/4</Btn>
        </Line>
      </Stack>
      <Opts>
        <Check label="Snap" on />
        <Snap><select aria-label="Snap value"><option>1/16</option></select><Icon n="up" /></Snap>
        <Check label="Loop" on />
        <Check label="Follow" />
        <Check label="Metro" />
        <Check label="Count" />
      </Opts>
      <ToolGrid>
        {[['arrow', 'blue'], ['pencil'], ['scissors'], ['spkx'], ['help'], ['undo'], ['tree'], ['grid', 'green'], ['auto', 'green'], ['mixer'], ['rack'], ['redo', 'muted']].map(([n, t]) => (
          <Btn key={n} $w={33} $h={33} $tone={t} aria-label={n}><Icon n={n} /></Btn>
        ))}
      </ToolGrid>
      <Acts>
        {['Split', 'Merge', 'Freeze', 'Adjust', 'Quantize', 'Duplicate'].map(t => <Btn key={t} $h={23} $fs={12}>{t}</Btn>)}
      </Acts>
    </Deck>
  </Footer>
);

export default function App() {
  return (
    <App_>
      <Global />
      <Arranger>
        <TrackSide />
        <Timeline />
        <Grip $v aria-label="Resize panels"><Icon n="up" /><Icon n="down" /></Grip>
      </Arranger>
      <Sampler />
      <Transport />
    </App_>
  );
}
